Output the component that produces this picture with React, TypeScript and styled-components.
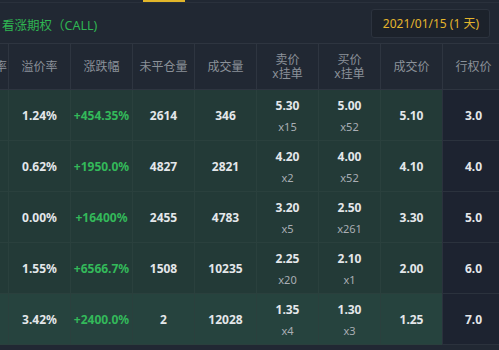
import * as React from 'react'
import styled, {createGlobalStyle} from 'styled-components'

const GlobalStyle = createGlobalStyle`
  html, body {
    margin: 0;
    padding: 0;
    background: #212833;
  }
  body {
    font-family: "Noto Sans", "Noto Sans CJK SC", sans-serif;
    width: 499px;
    height: 350px;
    overflow: hidden;
  }
`

const Page = styled.div`
  width: 499px;
  height: 350px;
  background: #212833;
  overflow: hidden;
`

const TabStrip = styled.div`
  display: flex;
  height: 2px;
  border-bottom: 1px solid #2a313c;
`

const TabMark = styled.div<{$active?: boolean; $w: number}>`
  width: ${p => p.$w}px;
  background: ${p => (p.$active ? '#e2b62a' : 'transparent')};
`

const TitleBar = styled.div`
  display: flex;
  align-items: center;
  justify-content: space-between;
  height: 40px;
  padding: 0 9px 0 2px;
`

const Title = styled.div`
  color: #2fb552;
  font-size: 12.5px;
  margin-top: 3px;
`

const DateBox = styled.div`
  color: #e5b52c;
  font-size: 12px;
  background: #1c222b;
  border: 1px solid #2c333e;
  border-radius: 3px;
  padding: 0 10px 0 11px;
  height: 27px;
  line-height: 27px;
  margin-top: 1px;
`

const TableClip = styled.div`
  overflow: hidden;
  width: 499px;
`

const Table = styled.div`
  margin-left: -54px;
  display: grid;
  grid-template-columns: repeat(9, 62px);
  width: ${9 * 62}px;
`

const HeadCell = styled.div`
  height: 45px;
  border-top: 1px solid #2e3540;
  border-bottom: 1px solid #2e3540;
  border-left: 1px solid #2e3540;
  display: flex;
  flex-direction: column;
  align-items: center;
  justify-content: center;
  color: #8b9199;
  font-size: 12px;
  line-height: 14px;
  white-space: nowrap;
  &:first-child {
    border-left: none;
    align-items: flex-end;
    padding-right: 1px;
  }
`

const Cell = styled.div<{$tone: 'green' | 'hot' | 'dark'}>`
  height: 50px;
  border-bottom: 1px solid ${p => (p.$tone === 'dark' ? '#2b323d' : '#2a403d')};
  border-left: 1px solid ${p => (p.$tone === 'dark' ? '#2b323d' : '#2a403d')};
  background: ${p => (p.$tone === 'dark' ? '#1d2330' : p.$tone === 'hot' ? '#26433e' : '#233a37')};
  display: flex;
  flex-direction: column;
  align-items: center;
  justify-content: center;
  color: #e4e7ea;
  font-size: 12px;
  font-weight: bold;
  white-space: nowrap;
`

const Up = styled.span`
  color: #33b95a;
`

const Qty = styled.span`
  color: #a9aeb4;
  font-weight: normal;
  font-size: 11px;
  margin-top: 5px;
`

type Row = {
  iv: string
  prem: string
  chg: string
  oi: string
  vol: string
  ask: string
  askQ: string
  bid: string
  bidQ: string
  last: string
  strike: string
}

const rows: Row[] = [
  {iv: '98%', prem: '1.24%', chg: '+454.35%', oi: '2614', vol: '346', ask: '5.30', askQ: 'x15', bid: '5.00', bidQ: 'x52', last: '5.10', strike: '3.0'},
  {iv: '76%', prem: '0.62%', chg: '+1950.0%', oi: '4827', vol: '2821', ask: '4.20', askQ: 'x2', bid: '4.00', bidQ: 'x52', last: '4.10', strike: '4.0'},
  {iv: '61%', prem: '0.00%', chg: '+16400%', oi: '2455', vol: '4783', ask: '3.20', askQ: 'x5', bid: '2.50', bidQ: 'x261', last: '3.30', strike: '5.0'},
  {iv: '55%', prem: '1.55%', chg: '+6566.7%', oi: '1508', vol: '10235', ask: '2.25', askQ: 'x20', bid: '2.10', bidQ: 'x1', last: '2.00', strike: '6.0'},
  {iv: '52%', prem: '3.42%', chg: '+2400.0%', oi: '2', vol: '12028', ask: '1.35', askQ: 'x4', bid: '1.30', bidQ: 'x3', last: '1.25', strike: '7.0'},
]

const App = () => (
  <Page>
    <GlobalStyle />
    <TabStrip>
      <TabMark $w={143} />
      <TabMark $w={42} $active={true} />
    </TabStrip>
    <TitleBar>
      <Title>看涨期权（CALL)</Title>
      <DateBox>2021/01/15 (1 天)</DateBox>
    </TitleBar>
    <TableClip>
      <Table>
        <HeadCell>隐含波动率</HeadCell>
        <HeadCell>溢价率</HeadCell>
        <HeadCell>涨跌幅</HeadCell>
        <HeadCell>未平仓量</HeadCell>
        <HeadCell>成交量</HeadCell>
        <HeadCell><span>卖价</span><span>x挂单</span></HeadCell>
        <HeadCell><span>买价</span><span>x挂单</span></HeadCell>
        <HeadCell>成交价</HeadCell>
        <HeadCell>行权价</HeadCell>
        {rows.map((r, i) => {
          const tone = i === rows.length - 1 ? 'hot' : 'green'
          return (
            <React.Fragment key={r.strike}>
              <Cell $tone={tone}>{r.iv}</Cell>
              <Cell $tone={tone}>{r.prem}</Cell>
              <Cell $tone={tone}><Up>{r.chg}</Up></Cell>
              <Cell $tone={tone}>{r.oi}</Cell>
              <Cell $tone={tone}>{r.vol}</Cell>
              <Cell $tone={tone}>{r.ask}<Qty>{r.askQ}</Qty></Cell>
              <Cell $tone={tone}>{r.bid}<Qty>{r.bidQ}</Qty></Cell>
              <Cell $tone={tone}>{r.last}</Cell>
              <Cell $tone="dark">{r.strike}</Cell>
            </React.Fragment>
          )
        })}
      </Table>
    </TableClip>
  </Page>
)

export default App
